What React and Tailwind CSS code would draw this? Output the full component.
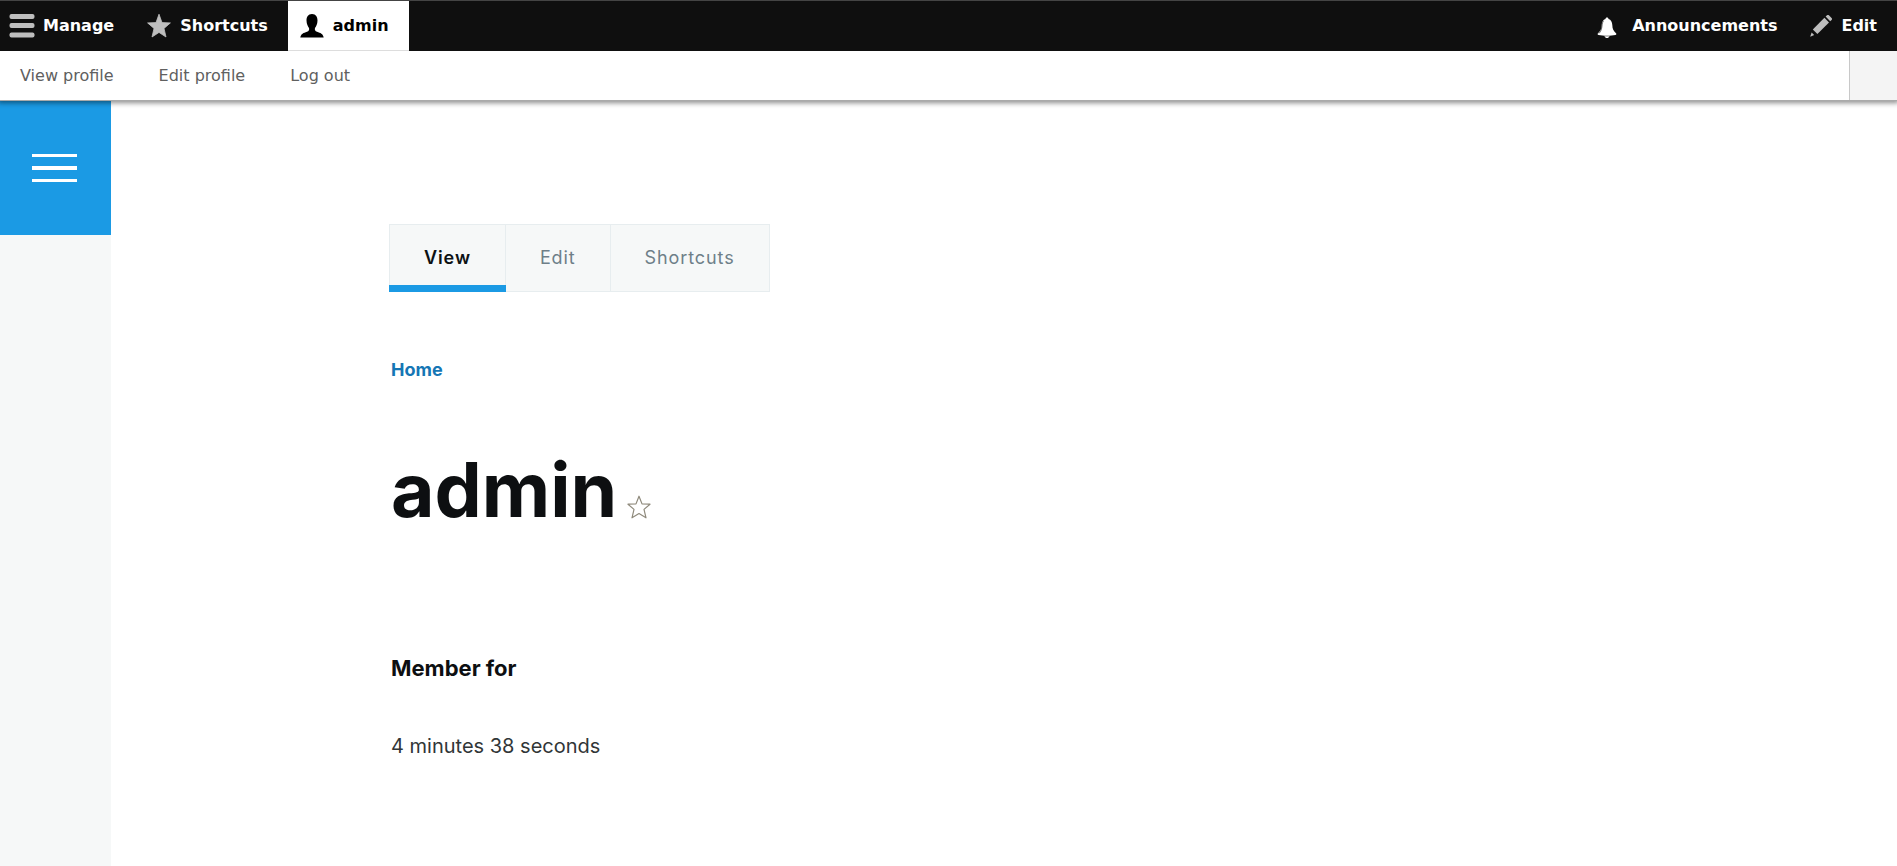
import React from "react";

const toolbarLink = "flex items-center font-bold";

function BarsIcon() {
  return (
    <svg width="26" height="26" viewBox="0 0 26 26" fill="#bebebe" aria-hidden="true">
      <rect x="0.5" y="1" width="25" height="5" rx="2" />
      <rect x="0.5" y="10" width="25" height="5" rx="2" />
      <rect x="0.5" y="19.5" width="25" height="5" rx="2" />
    </svg>
  );
}

function StarIcon() {
  return (
    <svg width="26" height="26" viewBox="0 0 26 26" fill="#bebebe" aria-hidden="true">
      <path d="M13 1.2 L16 9.6 L24.4 9.9 L18 15.4 L20 24 L13 19.4 L6 24 L8 15.4 L1.6 9.9 L10 9.6 Z" stroke="#bebebe" strokeWidth="0.8" strokeLinejoin="round" />
    </svg>
  );
}

function PersonIcon() {
  return (
    <svg width="26" height="26" viewBox="0 0 26 26" fill="#000" aria-hidden="true">
      <path d="M13 1 C9 1 7.5 4 7.5 7.5 C7.5 11 9 13.5 10 15 C10.6 17 9.8 18 8 18.8 C4.5 20 2 20.8 1.3 24.6 H24.7 C24 20.8 21.5 20 18 18.8 C16.2 18 15.4 17 16 15 C17 13.5 18.5 11 18.5 7.5 C18.5 4 17 1 13 1 Z" />
    </svg>
  );
}

function BellIcon() {
  return (
    <svg width="26" height="26" viewBox="-3 -4 26 26" fill="#fff" aria-hidden="true">
      <path d="M10 0.6 C9 0.6 8.6 1.2 8.5 2 C6 2.8 4.8 5 4.7 8 C4.6 12 3.5 14 1 16.2 C0.3 17 0.6 17.8 1.6 18 C6 19 14 19 18.4 18 C19.4 17.8 19.7 17 19 16.2 C16.5 14 15.4 12 15.3 8 C15.2 5 14 2.8 11.5 2 C11.4 1.2 11 0.6 10 0.6 Z" />
      <path d="M6.4 3.9 C4.9 6 5.2 9.5 4.4 12.3 C3.9 14 3 15.4 2 16.4" fill="none" stroke="#0f0f0f" strokeWidth="0.6" />
      <path d="M7.4 19.2 H12.6 C12 20.4 11.2 21 10 21 C8.8 21 8 20.4 7.4 19.2 Z" />
    </svg>
  );
}

function PencilIcon() {
  return (
    <svg width="24" height="24" viewBox="0 0 24 24" fill="#bebebe" aria-hidden="true">
      <path d="M16.6 2.6 L18 1.3 C18.6 0.8 19.3 0.8 19.9 1.3 L22.6 4 C23.2 4.6 23.2 5.3 22.6 5.9 L21.2 7.2 Z" />
      <path d="M15.4 3.8 L20 8.4 L8.4 20 L3.8 15.4 Z" />
      <path d="M2.6 18.4 L5.2 21 L1.2 22.8 Z" />
    </svg>
  );
}

function PageTab({ active, children }) {
  return (
    <li className={active ? "relative" : "border-l border-[#e7edef]"}>
      <a href="#tab" aria-current={active ? "page" : undefined} className={"flex h-[66px] items-center px-[34px] text-lg tracking-wider " + (active ? "font-semibold text-[#0d1214]" : "text-[#6e7f88]")}>
        {children}
      </a>
      {active && <span className="absolute -inset-x-px -bottom-px h-[7px] bg-[#1b9ae4]" />}
    </li>
  );
}

export default function App() {
  return (
    <div className="flex min-h-screen flex-col bg-white font-[Inter,sans-serif] text-[#0d0f11]">
      <header className="relative z-10 font-['DejaVu_Sans',sans-serif] text-base shadow-[0_0_5px_2px_rgba(0,0,0,0.45)]">
        <nav aria-label="Toolbar" className="flex h-[51px] justify-between border-t border-[#444] bg-[#0f0f0f] text-white">
          <div className="flex">
            <a href="#manage" className={toolbarLink + " gap-2 pl-[9px] pr-4"}><BarsIcon />Manage</a>
            <a href="#shortcuts" className={toolbarLink + " gap-2 pl-4 pr-5"}><StarIcon />Shortcuts</a>
            <a href="#admin" className={toolbarLink + " gap-2 border-b border-[#ddd] bg-white pl-[11px] pr-5 text-black"}><PersonIcon />admin</a>
          </div>
          <div className="flex">
            <a href="#announcements" className={toolbarLink + " gap-3 px-4"}><BellIcon />Announcements</a>
            <a href="#edit" className={toolbarLink + " gap-2 pl-4 pr-5"}><PencilIcon />Edit</a>
          </div>
        </nav>
        <div className="flex h-[50px] justify-between border-b border-[#aaa] bg-white text-[#606060]">
          <nav aria-label="User" className="flex items-center gap-[45px] pl-5">
            <a href="#profile">View profile</a>
            <a href="#edit-profile">Edit profile</a>
            <a href="#logout">Log out</a>
          </nav>
          <button type="button" aria-label="Vertical orientation" className="w-12 border-l border-[#c8c8c8] bg-[#f4f4f4]" />
        </div>
      </header>

      <div className="flex grow">
        <aside className="w-[111px] shrink-0 bg-[#f6f8f8]">
          <button type="button" aria-label="Main menu" className="flex h-[134px] w-full flex-col items-start justify-center gap-[9px] bg-[#1b9ae4] pl-8">
            <span className="h-[3px] w-[45px] bg-white" />
            <span className="h-1 w-[45px] bg-white" />
            <span className="h-[3px] w-[45px] bg-white" />
          </button>
        </aside>

        <main className="grow pt-[123px] pl-[278px]">
          <ul className="flex w-fit border border-[#e7edef] bg-[#f6f8f8]">
            <PageTab active>View</PageTab>
            <PageTab>Edit</PageTab>
            <PageTab>Shortcuts</PageTab>
          </ul>
          <div className="pl-0.5">
            <nav aria-label="Breadcrumb" className="mt-16 text-lg font-bold text-[#1576b5]">
              <a href="#home">Home</a>
            </nav>
            <div className="mt-[68px] flex items-end gap-2.5">
              <h1 className="text-[75px] leading-none font-bold">admin</h1>
              <button type="button" aria-label="Add to shortcuts" className="mb-2">
                <svg width="24" height="24" viewBox="0 0 24 24" fill="none" stroke="#8f8a7c" strokeWidth="1.2" aria-hidden="true">
                  <path d="M12 1.2 L15 8.9 L23 9.2 L17 14.4 L19 22.8 L12 18.6 L5 22.8 L7 14.4 L1 9.2 L9 8.9 Z" strokeLinejoin="round" />
                </svg>
              </button>
            </div>
            <h2 className="mt-[127px] text-[22px] leading-7 font-bold">Member for</h2>
            <p className="mt-[50px] text-xl text-[#313637]">4 minutes 38 seconds</p>
          </div>
        </main>
      </div>
    </div>
  );
}
